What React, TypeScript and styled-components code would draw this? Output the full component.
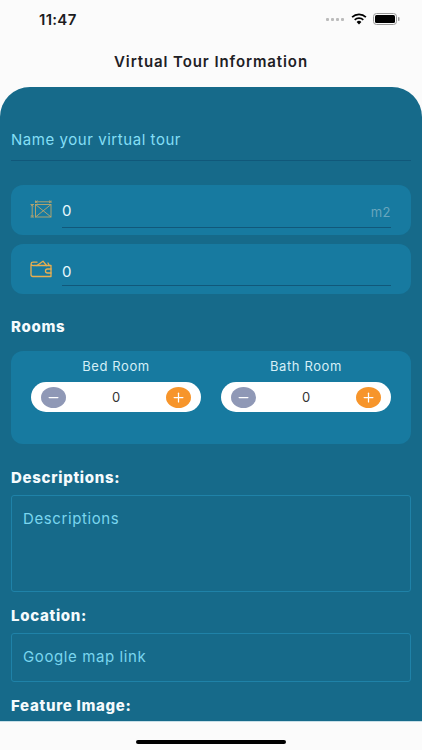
import React from 'react'
import styled, { createGlobalStyle } from 'styled-components'
import { Minus, Plus } from 'lucide-react'

const GlobalStyle = createGlobalStyle`
    html, body {
        margin: 0;
        padding: 0;
        background: #fbfbfb;
    }
    * {
        box-sizing: border-box;
    }
`

const Page = styled.div`
    width: 422px;
    height: 750px;
    display: flex;
    flex-direction: column;
    overflow: hidden;
    background: #fbfbfb;
    font-family: Inter, "Liberation Sans", sans-serif;
`

const StatusBar = styled.div`
    height: 38px;
    flex: none;
    display: flex;
    align-items: center;
    justify-content: space-between;
    padding: 0 22px 0 39px;
`

const Clock = styled.span`
    font-size: 15px;
    font-weight: 600;
    letter-spacing: 0.3px;
    color: #1c1c1e;
`

const StatusIcons = styled.div`
    display: flex;
    align-items: center;
    gap: 6px;
`

const Title = styled.h1`
    flex: none;
    height: 49px;
    margin: 0;
    padding-top: 15px;
    text-align: center;
    font-size: 15px;
    line-height: 18px;
    font-weight: 600;
    letter-spacing: 0.9px;
    color: #1e2024;
`

const Panel = styled.div`
    flex: 1;
    min-height: 0;
    overflow: hidden;
    padding: 0 11px;
    border-radius: 30px 30px 0 0;
    background: #166a8a;
    display: flex;
    flex-direction: column;
`

const NameField = styled.div`
    flex: none;
    height: 74px;
    padding-top: 44px;
    font-size: 15px;
    line-height: 18px;
    letter-spacing: 0.55px;
    color: #84dff6;
    border-bottom: 1px solid #11587a;
`

const MetricCards = styled.div`
    margin-top: 24px;
    display: flex;
    flex-direction: column;
    gap: 9px;
`

const MetricCard = styled.div`
    height: 50px;
    padding: 0 20px 0 19px;
    display: flex;
    gap: 10px;
    border-radius: 12px;
    background: #177aa0;
`

const MetricIcon = styled.div<{ $top: number }>`
    flex: none;
    width: 22px;
    padding-top: ${p => p.$top}px;
`

const MetricInput = styled.div<{ $top: number; $height: number }>`
    flex: 1;
    height: ${p => p.$height}px;
    padding-top: ${p => p.$top}px;
    display: flex;
    justify-content: space-between;
    border-bottom: 1px solid #11587a;
    font-size: 15px;
    line-height: 18px;
    color: #e8f8fd;
`

const Unit = styled.span`
    font-size: 13px;
    line-height: 20px;
    letter-spacing: 0.5px;
    color: #68a6bd;
`

const SectionLabel = styled.div<{ $top: number }>`
    flex: none;
    margin-top: ${p => p.$top}px;
    font-size: 15px;
    line-height: 18px;
    font-weight: 800;
    letter-spacing: 0.7px;
    color: #f5fbfd;
`

const RoomsCard = styled.div`
    flex: none;
    margin-top: 15px;
    height: 93px;
    padding: 7px 20px 0;
    display: flex;
    gap: 20px;
    border-radius: 12px;
    background: #177aa0;
`

const RoomColumn = styled.div`
    flex: 1;
    display: flex;
    flex-direction: column;
    align-items: center;
`

const RoomName = styled.div`
    font-size: 13px;
    line-height: 16px;
    letter-spacing: 0.6px;
    color: #d5eff7;
`

const Stepper = styled.div`
    margin-top: 8px;
    width: 100%;
    height: 30px;
    padding: 0 10px;
    display: flex;
    align-items: center;
    justify-content: space-between;
    border-radius: 15px;
    background: #fff;
    font-size: 13px;
    color: #333;
`

const StepButton = styled.div<{ $add?: boolean }>`
    width: 25px;
    height: 21px;
    display: flex;
    align-items: center;
    justify-content: center;
    border-radius: 50%;
    color: #fff;
    background: ${p => (p.$add ? '#f7952b' : '#8f98b6')};
`

const OutlineField = styled.div<{ $height: number }>`
    flex: none;
    margin-top: 8px;
    height: ${p => p.$height}px;
    padding: 14px 11px 0;
    border: 1px solid #1f82a8;
    border-radius: 3px;
    font-size: 15px;
    line-height: 18px;
    letter-spacing: 0.6px;
    color: #7ad6ef;
`

const HomeArea = styled.div`
    flex: none;
    height: 29px;
    display: flex;
    justify-content: center;
    padding-top: 18px;
    background: #fbfbfb;
    border-top: 1px solid #c7dfe8;
`

const HomeBar = styled.div`
    width: 150px;
    height: 4px;
    border-radius: 2px;
    background: #000;
`

const Wifi = () => (
    <svg width="16" height="12" viewBox="0 0 16 12">
        <path d="M8 11.5 5.6 8.9a3.4 3.4 0 0 1 4.8 0z" fill="#000" />
        <path d="M3.7 6.9a6.2 6.2 0 0 1 8.6 0" stroke="#000" strokeWidth="1.7" fill="none" />
        <path d="M1.1 4.1a10 10 0 0 1 13.8 0" stroke="#000" strokeWidth="1.7" fill="none" />
    </svg>
)

const Battery = () => (
    <svg width="27" height="12" viewBox="0 0 27 12">
        <rect x="0.5" y="0.5" width="23" height="11" rx="3" fill="none" stroke="#999" />
        <rect x="2" y="2" width="20" height="8" rx="1.5" fill="#000" />
        <rect x="25" y="4" width="1.5" height="4" rx="0.7" fill="#999" />
    </svg>
)

const SignalDots = () => (
    <svg width="20" height="4" viewBox="0 0 20 4">
        {[1, 6, 11, 16].map(x => (
            <rect key={x} x={x} y="1" width="3" height="3" rx="1" fill="#bbb" />
        ))}
    </svg>
)

const AreaIcon = () => (
    <svg width="22" height="18" viewBox="0 0 22 18" fill="none" stroke="#bda76c" strokeWidth="0.9">
        <rect x="5.5" y="4.5" width="15.5" height="12.5" />
        <path d="M5.5 4.5 21 17M21 4.5 5.5 17" />
        <path d="M5.5 0.5v2.5M21 0.5v2.5M6 1.8h14.500M7.5 0.6 6 1.8l1.5 1.2M19 0.6l1.5 1.2L19 3" />
        <path d="M0.5 4.5h3.5M0.5 17h3.5M2.2 5v11.5M1 6.2 2.2 5l1.2 1.2M1 15.2l1.2 1.3 1.2-1.3" />
    </svg>
)

const WalletIcon = () => (
    <svg width="22" height="18" viewBox="0 0 22 18" fill="none" stroke="#e9ae4f" strokeWidth="1.3" strokeLinejoin="round" strokeLinecap="round">
        <path d="M1 5v9.500a2 2 0 0 0 2 2h18V5.500H3.500A2.300 2.300 0 0 1 1 4a2 2 0 0 1 2-1.800h4" />
        <path d="M7 5.500 13 1.200l3.500 4.300M18 3l1.300 2.500" />
        <path d="M21 9h-3.500a2 2 0 0 0 0 4H21" />
    </svg>
)

const rooms = ['Bed Room', 'Bath Room']

const App: React.FC = () => {
    return (
        <Page>
            <GlobalStyle />
            <StatusBar>
                <Clock>11:47</Clock>
                <StatusIcons>
                    <SignalDots />
                    <Wifi />
                    <Battery />
                </StatusIcons>
            </StatusBar>
            <Title>Virtual Tour Information</Title>
            <Panel>
                <NameField>Name your virtual tour</NameField>
                <MetricCards>
                    <MetricCard>
                        <MetricIcon $top={15}><AreaIcon /></MetricIcon>
                        <MetricInput $top={17} $height={43}>
                            0
                            <Unit>m2</Unit>
                        </MetricInput>
                    </MetricCard>
                    <MetricCard>
                        <MetricIcon $top={16}><WalletIcon /></MetricIcon>
                        <MetricInput $top={19} $height={42}>0</MetricInput>
                    </MetricCard>
                </MetricCards>
                <SectionLabel $top={24}>Rooms</SectionLabel>
                <RoomsCard>
                    {rooms.map(room => (
                        <RoomColumn key={room}>
                            <RoomName>{room}</RoomName>
                            <Stepper>
                                <StepButton><Minus size={15} strokeWidth={2} /></StepButton>
                                0
                                <StepButton $add><Plus size={15} strokeWidth={2} /></StepButton>
                            </Stepper>
                        </RoomColumn>
                    ))}
                </RoomsCard>
                <SectionLabel $top={25}>Descriptions:</SectionLabel>
                <OutlineField $height={97}>Descriptions</OutlineField>
                <SectionLabel $top={15}>Location:</SectionLabel>
                <OutlineField $height={49}>Google map link</OutlineField>
                <SectionLabel $top={15}>Feature Image:</SectionLabel>
            </Panel>
            <HomeArea>
                <HomeBar />
            </HomeArea>
        </Page>
    )
}

export default App
